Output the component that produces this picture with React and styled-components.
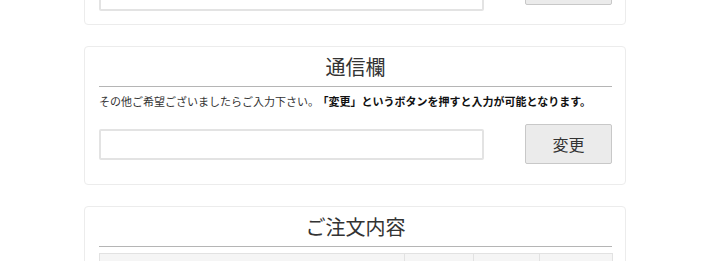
import React from "react";
import styled, { createGlobalStyle } from "styled-components";

const GlobalStyle = createGlobalStyle`
  body {
    margin: 0;
    background: #fff;
    font-family: "Noto Sans CJK JP", "Noto Sans", sans-serif;
    color: #333;
  }
`;

const Page = styled.div`
  width: 542px;
  margin: -62px 0 0 84px;
`;

const Card = styled.section`
  border: 1px solid #ececec;
  border-radius: 4px;
  background: #fff;
  padding: 6px 13px ${(p) => p.$bottom || 20}px 14px;
  margin-bottom: 21px;
`;

const Title = styled.h2`
  margin: 0;
  padding-bottom: 5px;
  border-bottom: 1px solid #b5b5b5;
  font-size: 20px;
  line-height: 28px;
  font-weight: 400;
  text-align: center;
  color: #333;
`;

const Note = styled.p`
  margin: 6px 0 0;
  font-size: 11px;
  line-height: 16px;
  color: #333;
  white-space: nowrap;
  b {
    margin-left: 4px;
    font-weight: 700;
    color: #111;
  }
`;

const Row = styled.div`
  display: flex;
  align-items: ${(p) => p.$align || "center"};
  justify-content: space-between;
  margin-top: ${(p) => p.$gap || 0}px;
`;

const Field = styled.input`
  box-sizing: border-box;
  width: 385px;
  height: ${(p) => p.$h || 31}px;
  border: 2px solid #e3e3e3;
  border-radius: 2px;
  background: #fff;
  outline: none;
`;

const Button = styled.button`
  box-sizing: border-box;
  width: 87px;
  height: 40px;
  margin-bottom: ${(p) => p.$lift || 0}px;
  border: 1px solid #c8c8c8;
  border-radius: 2px;
  background: #ebebeb;
  font-family: inherit;
  font-size: 16px;
  color: #333;
  cursor: pointer;
`;

const Table = styled.table`
  width: 100%;
  margin-top: 6px;
  border-collapse: collapse;
  table-layout: fixed;
  td {
    height: 30px;
    border: 1px solid #e2e2e2;
    background: #f5f5f5;
  }
`;

const cols = [305, 69, 66, 73];

export default function App() {
  return (
    <>
      <GlobalStyle />
      <Page>
        <Card $bottom={13}>
          <Row $align="flex-end" $gap={14}>
            <Field $h={52} />
            <Button $lift={6}>変更</Button>
          </Row>
        </Card>
        <Card>
          <Title>通信欄</Title>
          <Note>
            その他ご希望ございましたらご入力下さい。
            <b>「変更」というボタンを押すと入力が可能となります。</b>
          </Note>
          <Row $gap={15}>
            <Field />
            <Button>変更</Button>
          </Row>
        </Card>
        <Card>
          <Title>ご注文内容</Title>
          <Table>
            <colgroup>
              {cols.map((w, i) => (
                <col key={i} style={{ width: w }} />
              ))}
            </colgroup>
            <tbody>
              <tr>
                {cols.map((w, i) => (
                  <td key={i} />
                ))}
              </tr>
            </tbody>
          </Table>
        </Card>
      </Page>
    </>
  );
}
